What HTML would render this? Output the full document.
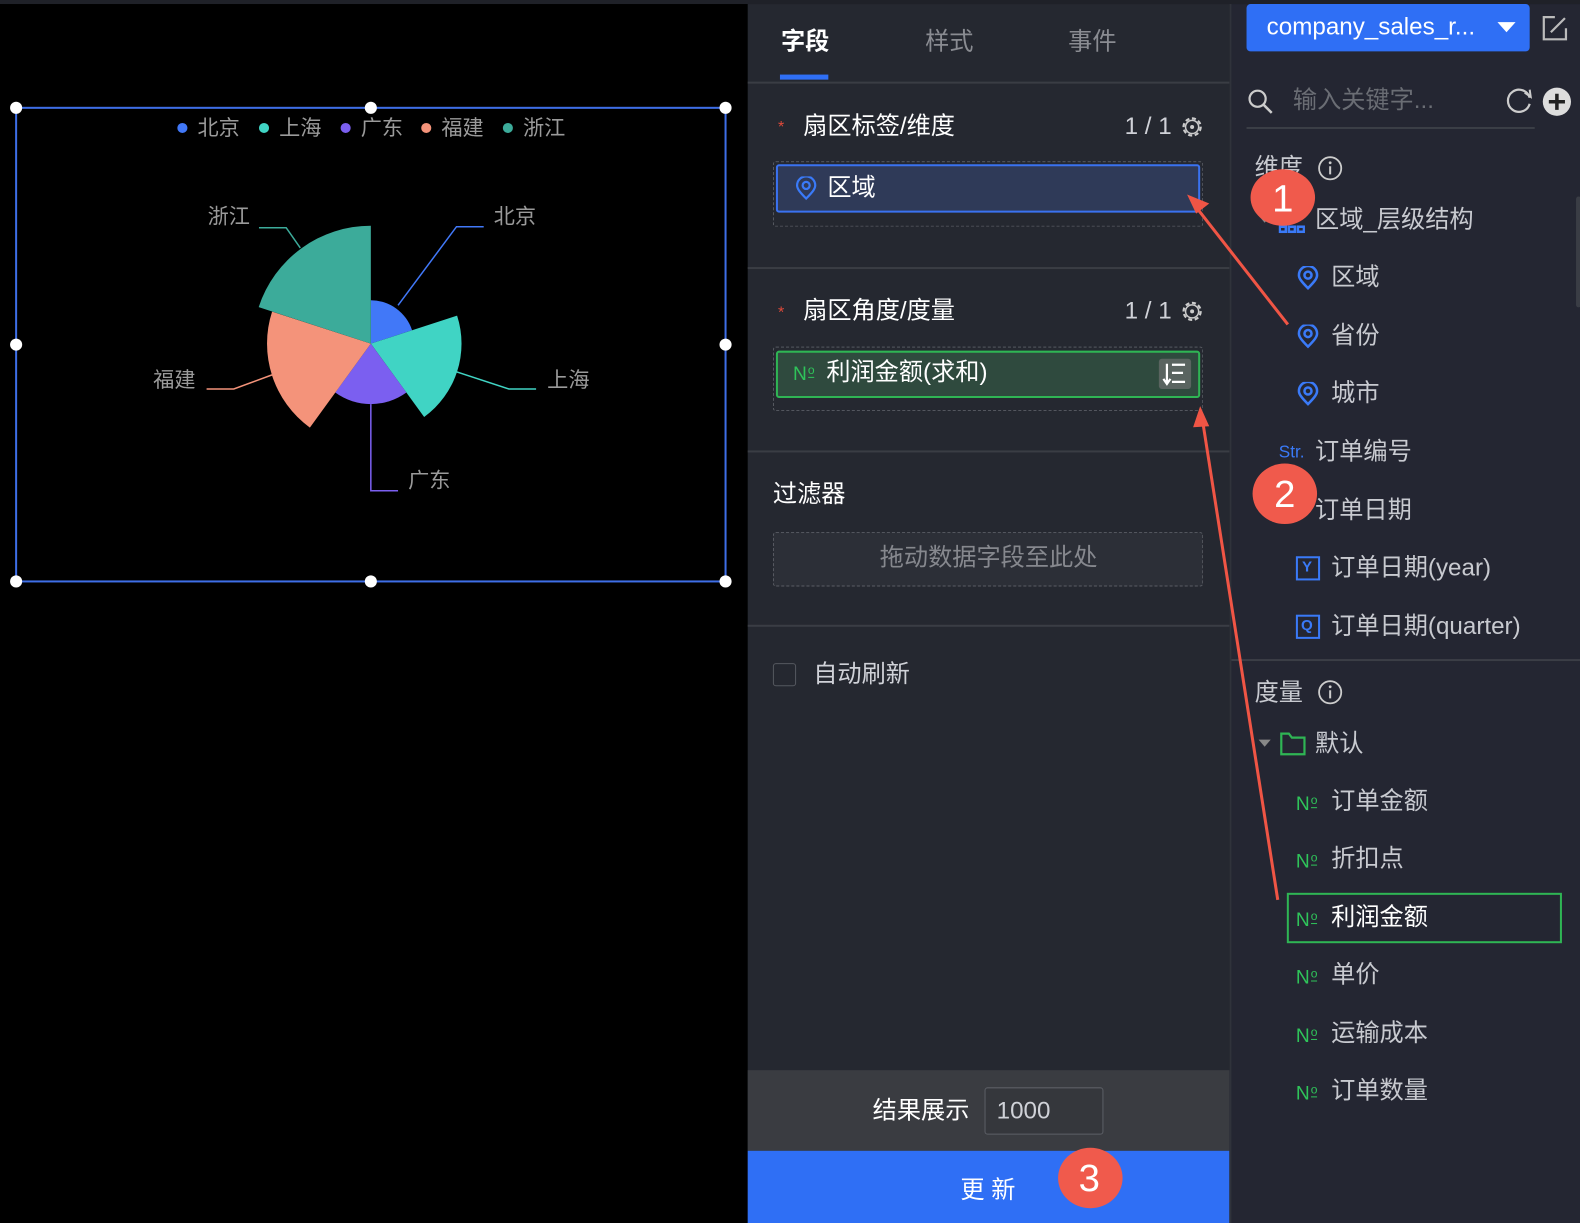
<!DOCTYPE html>
<html><head><meta charset="utf-8"><style>
*{margin:0;padding:0;box-sizing:border-box}
body{width:1580px;height:1214px;background:#000;position:relative;overflow:hidden;font-family:"Liberation Sans","Noto Sans CJK SC",sans-serif;color:#d0d2d8}
#w{position:absolute;left:0;top:0;width:1568px;height:1205px;transform:scale(1.0077);transform-origin:0 0}
.a{position:absolute}
.t{position:absolute;white-space:nowrap;font-size:24px;line-height:1;margin-top:-1px}
.no{position:absolute;white-space:nowrap;color:#2fc45a;font-size:19px;line-height:1}
.no span{font-size:12px;border-bottom:1.5px solid #2fc45a;vertical-align:6px;margin-left:1px}
</style></head><body><div id="w">
<div class="a" style="left:0;top:0;width:1568px;height:4px;background:#1f2128"></div>
<svg class="a" style="left:0;top:0" width="742" height="600" viewBox="0 0 742 600">
<rect x="16" y="107" width="704" height="470" fill="none" stroke="#3e6ee6" stroke-width="2"/>
<g fill="#fff"><circle cx="16" cy="107" r="6"/><circle cx="368" cy="107" r="6"/><circle cx="720" cy="107" r="6"/><circle cx="16" cy="342" r="6"/><circle cx="720" cy="342" r="6"/><circle cx="16" cy="577" r="6"/><circle cx="368" cy="577" r="6"/><circle cx="720" cy="577" r="6"/></g>
<g font-size="21" fill="#9a9a9a" font-family="Liberation Sans,Noto Sans CJK SC,sans-serif">
<circle cx="181" cy="127" r="5" fill="#4178f8"/><text x="196" y="134">北京</text>
<circle cx="262" cy="127" r="5" fill="#40d4c4"/><text x="277" y="134">上海</text>
<circle cx="343" cy="127" r="5" fill="#7b5ff0"/><text x="358" y="134">广东</text>
<circle cx="423" cy="127" r="5" fill="#f4937a"/><text x="438" y="134">福建</text>
<circle cx="504" cy="127" r="5" fill="#3cab9a"/><text x="519" y="134">浙江</text>
<text x="206" y="222">浙江</text><text x="490" y="222">北京</text><text x="152" y="384">福建</text><text x="543" y="384">上海</text><text x="405" y="484">广东</text>
</g>
<g transform="translate(368,341)">
<path d="M0 0 L0 -43 A43 43 0 0 1 40.9 -13.3 Z" fill="#4178f8"/>
<path d="M0 0 L85.6 -27.8 A90 90 0 0 1 52.9 72.8 Z" fill="#40d4c4"/>
<path d="M0 0 L35.3 48.5 A60 60 0 0 1 -35.3 48.5 Z" fill="#7b5ff0"/>
<path d="M0 0 L-60.5 83.3 A103 103 0 0 1 -98 -31.8 Z" fill="#f4937a"/>
<path d="M0 0 L-111.3 -36.2 A117 117 0 0 1 0 -117 Z" fill="#3cab9a"/>
</g>
<polyline points="395,303 453,225 480,225" fill="none" stroke="#4178f8" stroke-width="1.5"/>
<polyline points="453,369 505,386 532,386" fill="none" stroke="#40d4c4" stroke-width="1.5"/>
<polyline points="368,401 368,487 395,487" fill="none" stroke="#7b5ff0" stroke-width="1.5"/>
<polyline points="270,372 232,386 205,386" fill="none" stroke="#f4937a" stroke-width="1.5"/>
<polyline points="298,246 284,226 257,226" fill="none" stroke="#3cab9a" stroke-width="1.5"/>
</svg>
<div class="a" style="left:742px;top:4px;width:478px;height:1210px;background:#252830"></div>
<div class="t" style="left:775px;top:31px;color:#fff;font-weight:bold;font-size:24px">字段</div>
<div class="t" style="left:918px;top:31px;color:#8a8c92;font-size:24px">样式</div>
<div class="t" style="left:1060px;top:31px;color:#8a8c92;font-size:24px">事件</div>
<div class="a" style="left:774px;top:74px;width:48px;height:5px;background:#2f6ff5"></div>
<div class="a" style="left:742px;top:81px;width:478px;height:2px;background:#3a3d44"></div>
<div class="t" style="left:772px;top:120px;color:#e04a3a;font-size:16px">*</div>
<div class="t" style="left:797px;top:115px;color:#fff">扇区标签/维度</div>
<div class="t" style="left:1116px;top:115px;color:#d0d2d8">1 / 1</div>
<svg class="a" style="left:1171px;top:114px" width="24" height="24" viewBox="0 0 24 24"><circle cx="12" cy="12" r="8.5" fill="none" stroke="#ccc" stroke-width="2.2" stroke-dasharray="4 2.6"/><circle cx="12" cy="12" r="6.5" fill="none" stroke="#ccc" stroke-width="1.5"/><circle cx="12" cy="12" r="2" fill="#ccc"/></svg>
<div class="a" style="left:767px;top:160px;width:427px;height:65px;border:1.5px dashed #5a5d64;border-radius:3px"></div>
<div class="a" style="left:770px;top:163px;width:421px;height:48px;background:#2f3a58;border:2px solid #3a72f0;border-radius:3px"></div>
<svg class="a" style="left:789px;top:175px" width="22" height="24" viewBox="0 0 22 24"><path d="M11 22 C4 15 2 12 2 9 A9 9 0 0 1 20 9 C20 12 18 15 11 22Z" fill="none" stroke="#3a7af8" stroke-width="2.2"/><circle cx="11" cy="9" r="3.5" fill="none" stroke="#3a7af8" stroke-width="2.2"/></svg>
<div class="t" style="left:821px;top:176px;color:#fff">区域</div>
<div class="a" style="left:742px;top:265px;width:478px;height:2px;background:#3a3d44"></div>
<div class="t" style="left:772px;top:304px;color:#e04a3a;font-size:16px">*</div>
<div class="t" style="left:797px;top:298px;color:#fff">扇区角度/度量</div>
<div class="t" style="left:1116px;top:298px;color:#d0d2d8">1 / 1</div>
<svg class="a" style="left:1171px;top:297px" width="24" height="24" viewBox="0 0 24 24"><circle cx="12" cy="12" r="8.5" fill="none" stroke="#ccc" stroke-width="2.2" stroke-dasharray="4 2.6"/><circle cx="12" cy="12" r="6.5" fill="none" stroke="#ccc" stroke-width="1.5"/><circle cx="12" cy="12" r="2" fill="#ccc"/></svg>
<div class="a" style="left:767px;top:344px;width:427px;height:64px;border:1.5px dashed #5a5d64;border-radius:3px"></div>
<div class="a" style="left:770px;top:348px;width:421px;height:47px;background:#2f4a3e;border:2px solid #2fb554;border-radius:3px"></div>
<div class="no" style="left:787px;top:361px">N<span>o</span></div>
<div class="t" style="left:820px;top:359px;color:#fff">利润金额(求和)</div>
<div class="a" style="left:1150px;top:356px;width:32px;height:30px;background:#5a6460;border-radius:3px"></div>
<svg class="a" style="left:1150px;top:356px" width="32" height="30" viewBox="0 0 32 30"><g stroke="#fff" stroke-width="2.2" fill="none"><path d="M8 5 V24 M4.5 20 L8 25 L11.5 20"/><path d="M13 6 H26 M13 14 H24 M13 23 H26"/></g></svg>
<div class="a" style="left:742px;top:447px;width:478px;height:2px;background:#3a3d44"></div>
<div class="t" style="left:767px;top:480px;color:#fff">过滤器</div>
<div class="a" style="left:767px;top:528px;width:427px;height:54px;border:1.5px dashed #5a5d64;border-radius:3px;background:#2c2f37"></div>
<div class="t" style="left:873px;top:543px;color:#86888e">拖动数据字段至此处</div>
<div class="a" style="left:742px;top:620px;width:478px;height:2px;background:#3a3d44"></div>
<div class="a" style="left:767px;top:658px;width:23px;height:23px;border:1.5px solid #55585f;border-radius:3px"></div>
<div class="t" style="left:807px;top:659px;color:#d0d2d8">自动刷新</div>
<div class="a" style="left:742px;top:1062px;width:478px;height:80px;background:#3a3c41"></div>
<div class="t" style="left:866px;top:1092px;color:#fff">结果展示</div>
<div class="a" style="left:977px;top:1079px;width:118px;height:47px;border:1.5px solid #5c5f66;border-radius:3px;background:#35373c"></div>
<div class="t" style="left:989px;top:1092px;color:#d0d2d8">1000</div>
<div class="a" style="left:742px;top:1142px;width:478px;height:72px;background:#2f6ff5"></div>
<div class="t" style="left:953px;top:1171px;color:#fff">更 新</div>
<div class="a" style="left:1220px;top:4px;width:360px;height:1210px;background:#242632;border-left:2px solid #30333b"></div>
<div class="a" style="left:1237px;top:4px;width:281px;height:47px;background:#2f6ff5;border-radius:4px"></div>
<div class="t" style="left:1257px;top:16px;color:#fff;font-size:24px">company_sales_r...</div>
<svg class="a" style="left:1485px;top:20px" width="20" height="14"><path d="M1 2 H19 L10 12Z" fill="#fff"/></svg>
<svg class="a" style="left:1529px;top:14px" width="28" height="28" viewBox="0 0 28 28"><path d="M14 3 H3 V25 H25 V14" fill="none" stroke="#bbb" stroke-width="2.2"/><path d="M10 18 L24 4" stroke="#bbb" stroke-width="2.2"/></svg>
<svg class="a" style="left:1237px;top:87px" width="28" height="28" viewBox="0 0 28 28"><circle cx="11" cy="11" r="8" fill="none" stroke="#ccc" stroke-width="2.2"/><path d="M17 17 L25 25" stroke="#ccc" stroke-width="2.5"/></svg>
<div class="t" style="left:1283px;top:89px;color:#6a6d74">输入关键字...</div>
<svg class="a" style="left:1494px;top:86px" width="28" height="28" viewBox="0 0 28 28"><path d="M24 11 A11 11 0 1 0 24 17" fill="none" stroke="#ccc" stroke-width="2.2"/><path d="M19 6 L25 10 L24 3" fill="none" stroke="#ccc" stroke-width="2"/></svg>
<svg class="a" style="left:1530px;top:86px" width="30" height="30" viewBox="0 0 30 30"><circle cx="15" cy="15" r="14" fill="#ddd"/><path d="M15 7 V23 M7 15 H23" stroke="#222" stroke-width="3.5"/></svg>
<div class="a" style="left:1237px;top:126px;width:286px;height:2px;background:#3b3e46"></div>
<div class="t" style="left:1245px;top:156px;color:#c8cad0">维度</div>
<svg class="a" style="left:1307px;top:154px" width="26" height="26"><circle cx="13" cy="13" r="11" fill="none" stroke="#ccc" stroke-width="1.8"/><path d="M13 11 V19" stroke="#ccc" stroke-width="2"/><circle cx="13" cy="7.5" r="1.4" fill="#ccc"/></svg>
<svg class="a" style="left:1248px;top:213px" width="14" height="10"><path d="M1 1 H13 L7 8Z" fill="#888"/></svg>
<svg class="a" style="left:1269px;top:212px" width="26" height="20"><g fill="none" stroke="#3a7af8" stroke-width="2.5"><rect x="9" y="1" width="6" height="5"/><rect x="1" y="13" width="6" height="5"/><rect x="10" y="13" width="6" height="5"/><rect x="19" y="13" width="6" height="5"/></g></svg>
<div class="t" style="left:1305px;top:208px;color:#c8cad0">区域_层级结构</div>
<svg class="a" style="left:1287px;top:264px" width="22" height="24" viewBox="0 0 22 24"><path d="M11 22 C4 15 2 12 2 9 A9 9 0 0 1 20 9 C20 12 18 15 11 22Z" fill="none" stroke="#3a7af8" stroke-width="2.5"/><circle cx="11" cy="9" r="3.5" fill="none" stroke="#3a7af8" stroke-width="2.5"/></svg>
<div class="t" style="left:1321px;top:265px;color:#c8cad0">区域</div>
<svg class="a" style="left:1287px;top:322px" width="22" height="24" viewBox="0 0 22 24"><path d="M11 22 C4 15 2 12 2 9 A9 9 0 0 1 20 9 C20 12 18 15 11 22Z" fill="none" stroke="#3a7af8" stroke-width="2.5"/><circle cx="11" cy="9" r="3.5" fill="none" stroke="#3a7af8" stroke-width="2.5"/></svg>
<div class="t" style="left:1321px;top:323px;color:#c8cad0">省份</div>
<svg class="a" style="left:1287px;top:379px" width="22" height="24" viewBox="0 0 22 24"><path d="M11 22 C4 15 2 12 2 9 A9 9 0 0 1 20 9 C20 12 18 15 11 22Z" fill="none" stroke="#3a7af8" stroke-width="2.5"/><circle cx="11" cy="9" r="3.5" fill="none" stroke="#3a7af8" stroke-width="2.5"/></svg>
<div class="t" style="left:1321px;top:380px;color:#c8cad0">城市</div>
<div class="t" style="left:1269px;top:441px;color:#3a7af8;font-size:17px">Str.</div>
<div class="t" style="left:1305px;top:438px;color:#c8cad0">订单编号</div>
<svg class="a" style="left:1248px;top:501px" width="14" height="10"><path d="M1 1 H13 L7 8Z" fill="#888"/></svg>
<div class="t" style="left:1305px;top:496px;color:#c8cad0">订单日期</div>
<div class="a" style="left:1286px;top:552px;width:24px;height:24px;border:2px solid #3a7af8"></div>
<div class="t" style="left:1292px;top:556px;color:#3a7af8;font-size:15px;font-weight:bold">Y</div>
<div class="t" style="left:1321px;top:553px;color:#c8cad0">订单日期(year)</div>
<div class="a" style="left:1286px;top:610px;width:24px;height:24px;border:2px solid #3a7af8"></div>
<div class="t" style="left:1291px;top:614px;color:#3a7af8;font-size:15px;font-weight:bold">Q</div>
<div class="t" style="left:1321px;top:611px;color:#c8cad0">订单日期(quarter)</div>
<div class="a" style="left:1222px;top:654px;width:358px;height:2px;background:#3b3e46"></div>
<div class="t" style="left:1245px;top:677px;color:#c8cad0">度量</div>
<svg class="a" style="left:1307px;top:674px" width="26" height="26"><circle cx="13" cy="13" r="11" fill="none" stroke="#ccc" stroke-width="1.8"/><path d="M13 11 V19" stroke="#ccc" stroke-width="2"/><circle cx="13" cy="7.5" r="1.4" fill="#ccc"/></svg>
<svg class="a" style="left:1248px;top:733px" width="14" height="10"><path d="M1 1 H13 L7 8Z" fill="#888"/></svg>
<svg class="a" style="left:1270px;top:726px" width="26" height="24"><path d="M1.5 2 H9 L12 6 H24.5 V22.5 H1.5Z" fill="none" stroke="#2fb554" stroke-width="2.2"/></svg>
<div class="t" style="left:1305px;top:728px;color:#c8cad0">默认</div>
<div class="a" style="left:1277px;top:886px;width:273px;height:50px;border:2px solid #2fb554"></div>
<div class="no" style="left:1286px;top:788px">N<span>o</span></div>
<div class="t" style="left:1321px;top:785px;color:#c8cad0">订单金额</div>
<div class="no" style="left:1286px;top:845px">N<span>o</span></div>
<div class="t" style="left:1321px;top:842px;color:#c8cad0">折扣点</div>
<div class="no" style="left:1286px;top:903px">N<span>o</span></div>
<div class="t" style="left:1321px;top:900px;color:#fff">利润金额</div>
<div class="no" style="left:1286px;top:960px">N<span>o</span></div>
<div class="t" style="left:1321px;top:957px;color:#c8cad0">单价</div>
<div class="no" style="left:1286px;top:1018px">N<span>o</span></div>
<div class="t" style="left:1321px;top:1015px;color:#c8cad0">运输成本</div>
<div class="no" style="left:1286px;top:1075px">N<span>o</span></div>
<div class="t" style="left:1321px;top:1072px;color:#c8cad0">订单数量</div>
<div class="a" style="left:1564px;top:195px;width:5px;height:110px;background:#3a3d45;border-radius:3px"></div>
<svg class="a" style="left:0;top:0" width="1580" height="1214">
<g stroke="#f05545" stroke-width="3" fill="none"><path d="M1278 322 L1185 203"/><path d="M1268 893 L1193 415"/></g>
<path d="M1178 193 L1200 202 L1187 212Z" fill="#f05545"/>
<path d="M1191 403 L1200 423 L1184 424Z" fill="#f05545"/>
<g fill="#f05a4c"><ellipse cx="1273" cy="196" rx="32" ry="28"/><ellipse cx="1275" cy="490" rx="32" ry="30"/><ellipse cx="1082" cy="1169" rx="32" ry="30"/></g>
<g fill="#fff" font-size="38" font-family="Liberation Sans,sans-serif" text-anchor="middle"><text x="1273" y="210">1</text><text x="1275" y="503">2</text><text x="1081" y="1182">3</text></g>
</svg>
</div></body></html>
